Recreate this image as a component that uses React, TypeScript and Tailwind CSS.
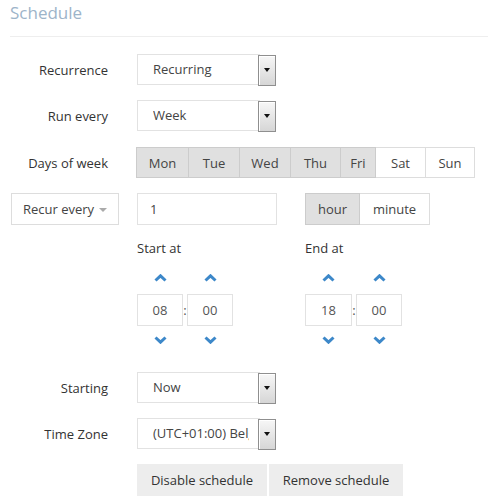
import React from "react";

function SelectBox({ value }: { value: string }) {
  return (
    <div className="flex items-start h-[32px]">
      <div className="w-[123px] h-[31px] border border-[#e2e2e2] bg-white pl-[15px] flex items-center text-[#444]">
        <span className="block w-[96px] overflow-hidden whitespace-nowrap">{value}</span>
      </div>
      <div className="relative z-10 -ml-[2px] mt-px w-[18px] h-[31px] border border-[#8f8f8f] bg-gradient-to-b from-[#f7f7f7] to-[#d6d6d6] shadow-[inset_1px_1px_0_#ffffff] flex items-center justify-center">
        <div className="w-0 h-0 border-l-[3px] border-r-[3px] border-t-[4px] border-l-transparent border-r-transparent border-t-[#111]" />
      </div>
    </div>
  );
}

function Label({ children }: { children: React.ReactNode }) {
  return <div className="w-[98px] text-right text-[#333] shrink-0">{children}</div>;
}

function Chevron({ up }: { up?: boolean }) {
  return (
    <svg width="13" height="8" viewBox="0 0 13 8">
      <polyline
        points={up ? "1.5,6.5 6.5,1.8 11.5,6.5" : "1.5,1.5 6.5,6.2 11.5,1.5"}
        fill="none"
        stroke="#3d88c9"
        strokeWidth="3"
        strokeLinejoin="miter"
      />
    </svg>
  );
}

function TimeSpinner({ h, m, hw, mw, gap }: { h: string; m: string; hw: string; mw: string; gap: string }) {
  return (
    <div className="flex flex-col">
      <div className="flex items-center h-[8px]">
        <div className={`${hw} flex justify-center`}><Chevron up /></div>
        <div className={gap} />
        <div className={`${mw} flex justify-center`}><Chevron up /></div>
      </div>
      <div className="flex items-center mt-[12px]">
        <div className={`${hw} h-[32px] border border-[#e2e2e2] flex items-center justify-center text-[#555]`}>{h}</div>
        <div className={`${gap} text-center text-[#555] leading-none`}>:</div>
        <div className={`${mw} h-[32px] border border-[#e2e2e2] flex items-center justify-center text-[#555]`}>{m}</div>
      </div>
      <div className="flex items-center h-[8px] mt-[10px]">
        <div className={`${hw} flex justify-center`}><Chevron /></div>
        <div className={gap} />
        <div className={`${mw} flex justify-center`}><Chevron /></div>
      </div>
    </div>
  );
}

export default function App() {
  const days: { d: string; w: string; on: boolean }[] = [
    { d: "Mon", w: "w-[53px]", on: true },
    { d: "Tue", w: "w-[51px]", on: true },
    { d: "Wed", w: "w-[51px]", on: true },
    { d: "Thu", w: "w-[50px]", on: true },
    { d: "Fri", w: "w-[35px]", on: true },
    { d: "Sat", w: "w-[50px]", on: false },
    { d: "Sun", w: "w-[49px]", on: false },
  ];
  return (
    <div className="w-[500px] h-[500px] overflow-hidden bg-white pl-[10px] pr-[12px] font-['Open_Sans',sans-serif] text-[13px] leading-[18px] text-[#333]">
      <div className="h-[37px] pt-[1px] border-b border-[#eeeeee] text-[17px] leading-[24px] text-[#9db4c9]">Schedule</div>

      <div className="flex items-center mt-[17px] h-[31px]">
        <Label>Recurrence</Label>
        <div className="ml-[29px]"><SelectBox value="Recurring" /></div>
      </div>

      <div className="flex items-center mt-[15px] h-[31px]">
        <Label>Run every</Label>
        <div className="ml-[29px]"><SelectBox value="Week" /></div>
      </div>

      <div className="flex items-center mt-[16px] h-[31px]">
        <Label>Days of week</Label>
        <div className="ml-[28px] flex">
          {days.map((x, i) => (
            <div
              key={x.d}
              className={`${x.w} h-[31px] flex items-center justify-center border-y border-r ${i === 0 ? "border-l" : ""} ${
                x.on ? "bg-[#e0e0e0] border-[#cccccc] text-[#444]" : "bg-white border-[#dddddd] text-[#444]"
              }`}
            >
              {x.d}
            </div>
          ))}
        </div>
      </div>

      <div className="flex items-center mt-[15px] h-[32px]">
        <div className="ml-px w-[108px] h-[32px] border border-[#dddddd] bg-white flex items-center justify-center gap-[5px] text-[#444]">
          <span>Recur every</span>
          <span className="w-0 h-0 border-l-[4px] border-r-[4px] border-t-[4px] border-l-transparent border-r-transparent border-t-[#aaaaaa] mt-px" />
        </div>
        <div className="ml-[18px] w-[140px] h-[32px] border border-[#e2e2e2] pl-[12px] flex items-center text-[#444]">1</div>
        <div className="ml-[28px] flex">
          <div className="w-[55px] h-[32px] bg-[#e0e0e0] border border-[#cccccc] flex items-center justify-center text-[#444]">hour</div>
          <div className="w-[70px] h-[32px] bg-white border-y border-r border-[#dddddd] flex items-center justify-center text-[#444]">minute</div>
        </div>
      </div>

      <div className="flex mt-[14px] pl-[127px]">
        <div className="w-[168px] flex flex-col">
          <div className="h-[18px]">Start at</div>
          <div className="mt-[17px]">
            <TimeSpinner h="08" m="00" hw="w-[46px]" mw="w-[46px]" gap="w-[4px]" />
          </div>
        </div>
        <div className="flex flex-col">
          <div className="h-[18px]">End at</div>
          <div className="mt-[17px]">
            <TimeSpinner h="18" m="00" hw="w-[47px]" mw="w-[46px]" gap="w-[4px]" />
          </div>
        </div>
      </div>

      <div className="flex items-center mt-[28px] h-[31px]">
        <Label>Starting</Label>
        <div className="ml-[29px]"><SelectBox value="Now" /></div>
      </div>

      <div className="flex items-center mt-[15px] h-[31px]">
        <Label>Time Zone</Label>
        <div className="ml-[29px]"><SelectBox value="(UTC+01:00) Belgrade, Bratislava" /></div>
      </div>

      <div className="flex mt-[15px] pl-[127px] gap-[2px]">
        <div className="w-[130px] h-[32px] bg-[#ededed] flex items-center justify-center text-[#333]">Disable schedule</div>
        <div className="w-[134px] h-[32px] bg-[#ededed] flex items-center justify-center text-[#333]">Remove schedule</div>
      </div>
    </div>
  );
}
